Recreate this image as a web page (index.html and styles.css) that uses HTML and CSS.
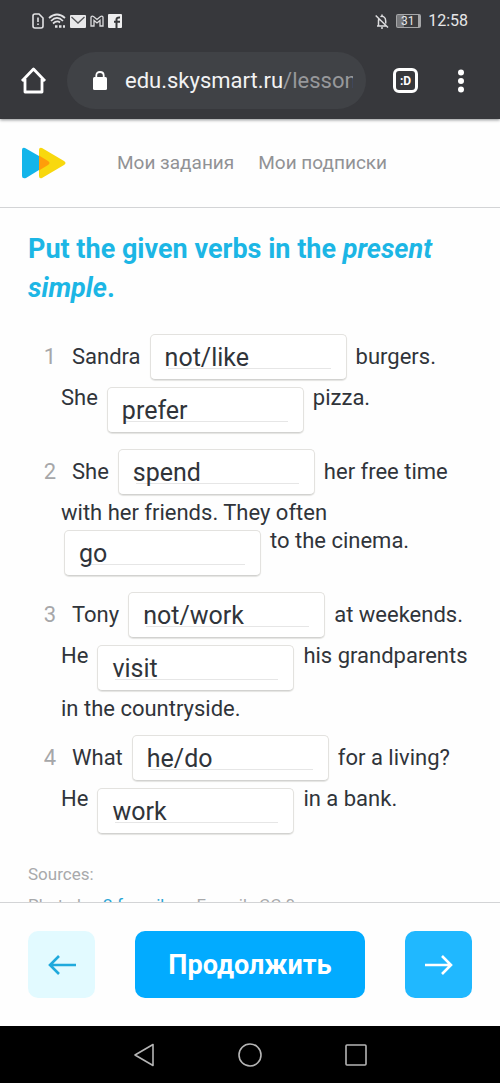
FILE: index.html
```html
<!DOCTYPE html>
<html lang="ru">
<head>
<meta charset="utf-8">
<meta name="viewport" content="width=device-width, initial-scale=1">
<title>Skysmart</title>
<link rel="stylesheet" href="styles.css">
</head>
<body>
<header class="browser">
  <div class="status">
    <div class="status-icons">
      <svg width="12" height="16" viewBox="0 0 12 16" fill="none" stroke="#e2e2e4" stroke-width="1.6"><path d="M1 3V13Q1 15 3 15H9Q11 15 11 13V5L7 1H3Q1 1 1 3ZM6 4.500V9M6 10.500V12"/></svg>
      <svg width="18" height="16" viewBox="0 0 18 16" fill="none" stroke="#e2e2e4" stroke-width="1.7"><path d="M1 5Q9 -2 17 5M3 8Q9 2 15 8M5 10.500Q9 7 12 9.500"/><path stroke-width="2.500" stroke-dasharray="2.500 1.500" d="M7 13.500H17"/></svg>
      <svg width="16" height="13" viewBox="0 0 16 13"><rect width="16" height="13" rx="1" fill="#e8e8ea"/><path d="M1.500 2L8 8L14.500 2" fill="none" stroke="#555659" stroke-width="1.300"/></svg>
      <svg width="14" height="12" viewBox="0 0 14 12" fill="none" stroke="#dcdcde" stroke-width="1.300"><path d="M1 2Q2 .5 3.500 1.500L7 4.500L10.500 1.500Q12 .5 13 2V11H10V5.500L7 8L4 5.500V11H1Z"/></svg>
      <svg width="14" height="14" viewBox="0 0 14 14"><rect width="14" height="14" rx="1" fill="#eeeeef"/><path d="M8.500 14V5.500Q8.500 3.200 12 3.500M6 7.700H12" fill="none" stroke="#37383b" stroke-width="2"/></svg>
    </div>
    <div class="status-info">
      <svg width="14" height="15" viewBox="0 0 14 15" fill="none" stroke="#dddddf" stroke-width="1.500"><path d="M2 12H11M3.500 11.500V6.500Q3.500 5 4.300 4M5.500 2.800Q7 1.500 9 3Q10.700 4.200 10.700 7V9.500M6 14H8M7 .5V2M.7 1.500L13 13.500"/></svg>
      <span class="battery">31</span>
      <span>12:58</span>
    </div>
  </div>
  <div class="toolbar">
    <button class="tool" aria-label="Home"><svg width="27" height="27" viewBox="0 0 27 27" fill="none" stroke="#fff" stroke-width="2.800" stroke-linejoin="round"><path d="M2 14L13.500 2L25 14M5 12V25H22V12"/></svg></button>
    <button class="address">
      <svg width="14" height="19" viewBox="0 0 14 19"><rect y="6" width="14" height="13" rx="1.500" fill="#fff"/><path d="M3.300 7V4.500Q3.300 1 7 1T10.700 4.500V7" fill="none" stroke="#fff" stroke-width="1.800"/></svg>
      <span class="url">edu.skysmart.ru<span class="path">/lesson</span></span>
    </button>
    <button class="tool tabs" aria-label="Tabs">:D</button>
    <button class="tool" aria-label="Menu"><svg width="8" height="24" viewBox="0 0 8 24" fill="#fff"><circle cx="4" cy="3.500" r="3"/><circle cx="4" cy="12" r="3"/><circle cx="4" cy="20.500" r="3"/></svg></button>
  </div>
</header>

<nav class="site-nav">
  <a href="#" class="logo" aria-label="Skysmart"><svg width="44" height="32" viewBox="0 0 44 32"><path d="M0 3Q0 0 3 1L17 9V23L4 31Q0 32 0 29Z" fill="#13b5ea"/><path d="M17 3Q17 0 20 1L42 14Q45 16 42 18L20 31Q17 32 17 29Z" fill="#f8d80e"/><path d="M17 8.500L26 14Q29 16 26 18L17 23.500Z" fill="#ff9d0a"/></svg></a>
  <a href="#">Мои задания</a>
  <a href="#">Мои подписки</a>
</nav>

<main class="lesson" lang="en">
  <h1>Put the given verbs in the <em>present simple</em>.</h1>
  <ol class="tasks">
    <li>
      <div class="row first"><span class="num">1</span><span>Sandra</span><input aria-label="Sandra" value="not/like"><span>burgers.</span></div>
      <div class="row"><span>She</span><input aria-label="She" value="prefer"><span>pizza.</span></div>
    </li>
    <li>
      <div class="row first"><span class="num">2</span><span>She</span><input aria-label="She" value="spend"><span>her free time</span></div>
      <div class="line">with her friends. They often</div>
      <div class="row"><input aria-label="They often" value="go"><span>to the cinema.</span></div>
    </li>
    <li>
      <div class="row first"><span class="num">3</span><span>Tony</span><input aria-label="Tony" value="not/work"><span>at weekends.</span></div>
      <div class="row"><span>He</span><input aria-label="He" value="visit"><span>his grandparents</span></div>
      <div class="line">in the countryside.</div>
    </li>
    <li>
      <div class="row first"><span class="num">4</span><span>What</span><input aria-label="What" value="he/do"><span>for a living?</span></div>
      <div class="row"><span>He</span><input aria-label="He" value="work"><span>in a bank.</span></div>
    </li>
  </ol>
  <div class="sources">
    <p>Sources:</p>
    <p>Photo by &nbsp;<a href="#">2.freepik</a> on Freepik, CC 0</p>
  </div>
</main>

<footer class="actions">
  <button class="square back" aria-label="Назад"><svg width="28" height="20" viewBox="0 0 28 20" fill="none" stroke="#1fa9dc" stroke-width="2.600"><path d="M28 10H2M11 1L2 10L11 19"/></svg></button>
  <button class="continue">Продолжить</button>
  <button class="square next" aria-label="Вперёд"><svg width="28" height="20" viewBox="0 0 28 20" fill="none" stroke="#fff" stroke-width="2.600"><path d="M0 10H26M17 1L26 10L17 19"/></svg></button>
</footer>

<div class="system">
  <button class="tool" aria-label="Back"><svg width="22" height="24" viewBox="0 0 22 24" fill="none" stroke="#b5b5b5" stroke-width="1.600" stroke-linejoin="round"><path d="M20 1.500V22.500L2 12Z"/></svg></button>
  <button class="tool" aria-label="Home screen"><svg width="24" height="24" viewBox="0 0 24 24" fill="none" stroke="#b5b5b5" stroke-width="1.600"><circle cx="12" cy="12" r="11"/></svg></button>
  <button class="tool" aria-label="Recent"><svg width="22" height="22" viewBox="0 0 22 22" fill="none" stroke="#b5b5b5" stroke-width="1.600"><rect x="1" y="1" width="20" height="20" rx="1"/></svg></button>
</div>
</body>
</html>
```

FILE: styles.css
```css
* {
  box-sizing: border-box;
}

body {
  margin: 0;
  height: 100vh;
  display: flex;
  flex-direction: column;
  background: #fefefe;
  color: #30343a;
  font-family: Roboto, sans-serif;
  font-size: 22px;
  line-height: 28px;
}

button {
  border: 0;
  padding: 0;
  font-family: inherit;
  cursor: pointer;
}

svg {
  display: block;
  flex: none;
}

a {
  text-decoration: none;
}

.browser {
  flex: none;
  background: #37383c;
  box-shadow: 0 1px 3px #8c8f90;
  padding-bottom: 10px;
}

.status {
  display: flex;
  align-items: center;
  justify-content: space-between;
  height: 42px;
  padding: 0 32px;
}

.status-icons {
  display: flex;
  align-items: center;
  gap: 4px;
}

.status-info {
  display: flex;
  align-items: center;
  gap: 7px;
  color: #e6e6e8;
  font-size: 16px;
}

.battery {
  width: 25px;
  height: 14px;
  border: 1px solid #a5a6a8;
  border-right-width: 3px;
  border-radius: 2px;
  background: linear-gradient(90deg, #77787b 31%, #3b3c3f 31%);
  font-size: 12px;
  line-height: 12px;
  text-align: center;
}

.toolbar {
  display: flex;
  align-items: center;
  padding: 10px 35px 0 20px;
}

.tool {
  display: flex;
  background: none;
}

.address {
  flex: 1;
  min-width: 0;
  display: flex;
  align-items: center;
  gap: 18px;
  height: 57px;
  margin: 0 27px 0 20px;
  padding: 0 13px 0 26px;
  border-radius: 29px;
  background: #404246;
  color: #f2f2f3;
  font-size: 22px;
}

.url {
  min-width: 0;
  overflow: hidden;
  white-space: nowrap;
}

.path {
  color: #97989b;
}

.tabs {
  align-items: center;
  justify-content: center;
  width: 25px;
  height: 25px;
  margin-right: 39px;
  border: 3px solid #fff;
  border-radius: 6px;
  color: #fff;
  font-size: 12px;
  font-weight: 700;
}

.site-nav {
  flex: none;
  display: flex;
  align-items: center;
  gap: 24px;
  height: 89px;
  padding: 0 22px;
  border-bottom: 1px solid #d3d4d6;
  font-size: 19px;
}

.site-nav a {
  color: #919295;
}

.site-nav .logo {
  margin-right: 27px;
}

.lesson {
  flex: 1;
  min-height: 0;
  overflow: hidden;
  padding: 22px 28px 0;
}

h1 {
  margin: 0;
  color: #1cb6e5;
  font-size: 27px;
  font-weight: 700;
  line-height: 39px;
}

.tasks {
  display: flex;
  flex-direction: column;
  gap: 12px;
  margin: 26px 0 0;
  padding: 0 0 0 33px;
  list-style: none;
}

.row {
  display: flex;
  align-items: flex-start;
  gap: 6px;
  white-space: nowrap;
}

.row:not(:last-child) {
  margin-bottom: 4px;
}

li:not(:nth-child(3)):not(:last-child) {
  padding-bottom: 4px;
}

.row input {
  width: 197px;
  height: 46px;
  margin: 3px 3px 0;
  padding: 0 14px;
  border: 1px solid #e3e2df;
  border-bottom-color: #d2d2d0;
  border-radius: 5px;
  background: linear-gradient(#e6e6e6, #e6e6e6) 17px 33px / 163px 1px no-repeat #fff;
  box-shadow: 0 1px 1px #e4e4e2;
  color: #30343a;
  font-family: inherit;
  font-size: 25px;
}

.first {
  align-items: center;
  margin-left: -33px;
}

.first input {
  margin-top: 0;
}

.num {
  width: 28px;
  margin-right: 10px;
  color: #a6a7a9;
  text-align: right;
}

.sources {
  margin-top: 26px;
  color: #a8a9ab;
  font-size: 17px;
}

.sources p {
  margin: 0 0 3px;
}

.sources a {
  color: #2aa5d5;
}

.actions {
  flex: none;
  display: flex;
  align-items: center;
  gap: 40px;
  padding: 28px;
  border-top: 1px solid #d3d4d6;
}

.square {
  display: flex;
  align-items: center;
  justify-content: center;
  width: 67px;
  height: 67px;
  border-radius: 10px;
}

.back {
  background: #e2faff;
}

.next {
  background: #20b8ff;
}

.continue {
  flex: 1;
  height: 67px;
  border-radius: 10px;
  background: #02abff;
  color: #fff;
  font-size: 27px;
  font-weight: 700;
}

.system {
  flex: none;
  display: flex;
  align-items: center;
  justify-content: center;
  gap: 83px;
  height: 57px;
  background: #000;
}
```
